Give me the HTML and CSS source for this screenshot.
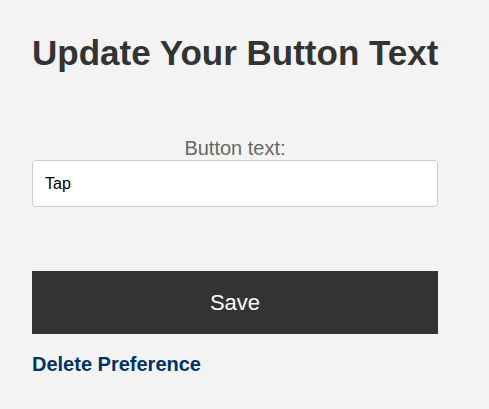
FILE: index.html
```html
<!DOCTYPE html>
<html>
<head>
<meta charset="utf-8">
<link rel="stylesheet" href="styles.css">
</head>
<body>
<main class="page">
  <h1 class="title">Update Your Button Text</h1>
  <form class="form">
    <label class="label" for="btntext">Button text:</label>
    <input class="input" id="btntext" type="text" value="Tap">
    <button class="save" type="button">Save</button>
  </form>
  <a class="delete" href="#">Delete Preference</a>
</main>
</body>
</html>
```
FILE: styles.css
```css
html, body {
  margin: 0;
  padding: 0;
  background: #f3f3f3;
  font-family: "Liberation Sans", Arial, sans-serif;
}
.page {
  width: 406px;
  padding: 33px 32px 20px;
  display: flex;
  flex-direction: column;
}
.title {
  margin: 0;
  font-size: 35px;
  line-height: 40px;
  font-weight: bold;
  color: #333;
  white-space: nowrap;
}
.form {
  display: flex;
  flex-direction: column;
  margin-top: 64px;
}
.label {
  text-align: center;
  font-size: 20px;
  line-height: 23px;
  color: #666;
}
.input {
  box-sizing: border-box;
  height: 47px;
  margin: 0;
  padding: 0 12px;
  border: 1px solid #ccc;
  border-radius: 4px;
  background: #fff;
  font-family: "Liberation Sans", Arial, sans-serif;
  font-size: 16px;
  color: #000;
}
.save {
  margin-top: 64px;
  height: 63px;
  border: 0;
  border-radius: 0;
  background: #333;
  color: #fff;
  font-family: "Liberation Sans", Arial, sans-serif;
  font-size: 22px;
  padding: 0;
}
.delete {
  margin-top: 19px;
  align-self: flex-start;
  font-size: 20px;
  line-height: 23px;
  font-weight: bold;
  color: #003366;
  text-decoration: none;
}
```
